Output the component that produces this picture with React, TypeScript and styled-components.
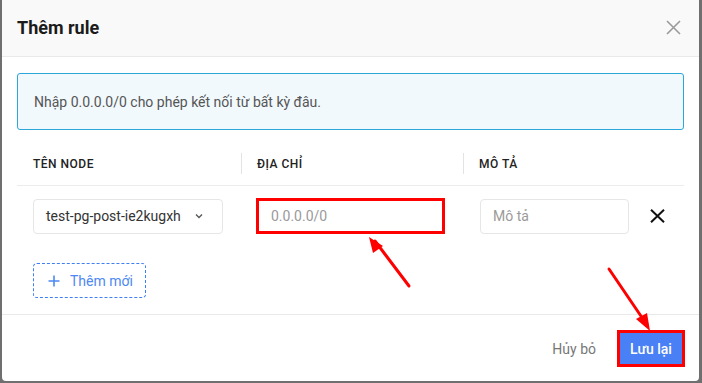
import React from "react";
import styled, { createGlobalStyle } from "styled-components";

const Global = createGlobalStyle`
  html, body { margin: 0; padding: 0; }
  body {
    background: #6f6f6f;
    font-family: Roboto, "Noto Sans", Arial, sans-serif;
    width: 702px;
    height: 383px;
    overflow: hidden;
  }
  * { box-sizing: border-box; }
`;

const Modal = styled.div`
  margin-left: 2px;
  width: 697px;
  height: 381px;
  background: #fff;
  border-radius: 0 0 4px 4px;
  display: flex;
  flex-direction: column;
  overflow: hidden;
`;

const Header = styled.div`
  height: 57px;
  flex: none;
  background: #f9f9f9;
  border-bottom: 1px solid #e9e9e9;
  display: flex;
  align-items: center;
  justify-content: space-between;
  padding: 0 18px 0 15px;
`;

const Title = styled.h2`
  margin: 0;
  font-size: 18px;
  font-weight: 700;
  color: #1b1b1b;
  padding-bottom: 2px;
`;

const CloseBtn = styled.button`
  border: 0;
  background: none;
  padding: 0;
  width: 16px;
  height: 16px;
  display: flex;
  align-items: center;
  justify-content: center;
  margin-bottom: 2px;
`;

const Body = styled.div`
  flex: 1;
  padding: 16px 15px 0 15px;
  display: flex;
  flex-direction: column;
`;

const Alert = styled.div`
  height: 57px;
  border: 1px solid #2ba7da;
  border-radius: 3px;
  background: #f2f9fd;
  display: flex;
  align-items: center;
  padding: 0 16px;
  font-size: 14px;
  color: #555;
`;

const Grid = styled.div`
  display: grid;
  grid-template-columns: 224px 222px 1fr 50px;
  align-items: center;
`;

const HeadRow = styled(Grid)`
  margin-top: 23px;
  padding-bottom: 11px;
  border-bottom: 1px solid #ececec;
`;

const HeadCell = styled.div<{ $sep?: boolean }>`
  height: 21px;
  display: flex;
  align-items: center;
  padding-left: ${(p) => (p.$sep ? "15px" : "16px")};
  border-left: ${(p) => (p.$sep ? "1px solid #e3e3e3" : "none")};
  font-size: 12px;
  font-weight: 500;
  letter-spacing: 0.5px;
  color: #222;
`;

const DataRow = styled(Grid)`
  padding-top: 12px;
`;

const Cell = styled.div<{ $pl: number }>`
  padding-left: ${(p) => p.$pl}px;
  display: flex;
  align-items: center;
`;

const Select = styled.div`
  width: 190px;
  height: 35px;
  border: 1px solid #e6e6e6;
  border-radius: 4px;
  display: flex;
  align-items: center;
  justify-content: space-between;
  padding: 0 19px 0 12px;
  font-size: 14px;
  color: #333;
`;

const Input = styled.div<{ $w: number; $mark?: boolean }>`
  width: ${(p) => p.$w}px;
  height: ${(p) => (p.$mark ? 36 : 35)}px;
  border: ${(p) => (p.$mark ? "3px solid #ff0000" : "1px solid #e6e6e6")};
  border-radius: ${(p) => (p.$mark ? "0" : "4px")};
  display: flex;
  align-items: center;
  padding-left: ${(p) => (p.$mark ? 12 : 12)}px;
  font-size: 14px;
  color: #9a9a9a;
`;

const DelBtn = styled.button`
  border: 0;
  background: none;
  padding: 0;
  margin-left: 16px;
  display: flex;
`;

const AddBtn = styled.button`
  margin: 29px 0 0 16px;
  width: 113px;
  height: 35px;
  border: 1px dashed #3f7ff4;
  border-radius: 4px;
  background: #fff;
  display: flex;
  align-items: center;
  gap: 10px;
  padding: 0 0 0 14px;
  font-family: inherit;
  font-size: 14px;
  color: #4d88f4;
`;

const Footer = styled.div`
  height: 67px;
  flex: none;
  border-top: 1px solid #e9e9e9;
  display: flex;
  align-items: center;
  justify-content: flex-end;
  gap: 21px;
  padding: 1px 14px 0 0;
`;

const Cancel = styled.button`
  border: 0;
  background: none;
  padding: 0;
  font-family: inherit;
  font-size: 14px;
  color: #777;
`;

const Save = styled.button`
  width: 68px;
  height: 37px;
  border: 3px solid #ff0000;
  background: #4a80f5;
  color: #fff;
  font-family: inherit;
  font-size: 14px;
  font-weight: 500;
  padding: 0;
`;

const Overlay = styled.svg`
  position: fixed;
  left: 0;
  top: 0;
  pointer-events: none;
`;

export default function App() {
  return (
    <>
      <Global />
      <Modal>
        <Header>
          <Title>Thêm rule</Title>
          <CloseBtn aria-label="close">
            <svg width="15" height="15" viewBox="0 0 15 15">
              <path d="M1 1 L14 14 M14 1 L1 14" stroke="#9a9a9a" strokeWidth="1.6" fill="none" />
            </svg>
          </CloseBtn>
        </Header>
        <Body>
          <Alert>Nhập 0.0.0.0/0 cho phép kết nối từ bất kỳ đâu.</Alert>
          <HeadRow>
            <HeadCell>TÊN NODE</HeadCell>
            <HeadCell $sep>ĐỊA CHỈ</HeadCell>
            <HeadCell $sep>MÔ TẢ</HeadCell>
            <div />
          </HeadRow>
          <DataRow>
            <Cell $pl={16}>
              <Select>
                <span>test-pg-post-ie2kugxh</span>
                <svg width="8" height="6" viewBox="0 0 8 6">
                  <path d="M1 1.5 L4 4.5 L7 1.5" stroke="#555" strokeWidth="1.3" fill="none" />
                </svg>
              </Select>
            </Cell>
            <Cell $pl={15}>
              <Input $w={189} $mark>0.0.0.0/0</Input>
            </Cell>
            <Cell $pl={17}>
              <Input $w={149}>Mô tả</Input>
            </Cell>
            <Cell $pl={0}>
              <DelBtn aria-label="remove">
                <svg width="15" height="14" viewBox="0 0 15 14">
                  <path d="M1 0.8 L14 13.2 M14 0.8 L1 13.2" stroke="#111" strokeWidth="2" fill="none" />
                </svg>
              </DelBtn>
            </Cell>
          </DataRow>
          <AddBtn>
            <svg width="12" height="12" viewBox="0 0 12 12">
              <path d="M6 0.5 V11.5 M0.5 6 H11.5" stroke="#4d88f4" strokeWidth="1.6" fill="none" />
            </svg>
            Thêm mới
          </AddBtn>
        </Body>
        <Footer>
          <Cancel>Hủy bỏ</Cancel>
          <Save>Lưu lại</Save>
        </Footer>
      </Modal>
      <Overlay width="702" height="383" viewBox="0 0 702 383">
        <g stroke="#ff0000" strokeWidth="3" fill="none" strokeLinecap="round">
          <path d="M409 286 L375 241" />
          <path d="M609 269 L645 322" />
        </g>
        <g fill="#ff0000">
          <path d="M369 237 L383 246 L373 253 Z" />
          <path d="M650 331 L636 319 L647 313 Z" />
        </g>
      </Overlay>
    </>
  );
}
